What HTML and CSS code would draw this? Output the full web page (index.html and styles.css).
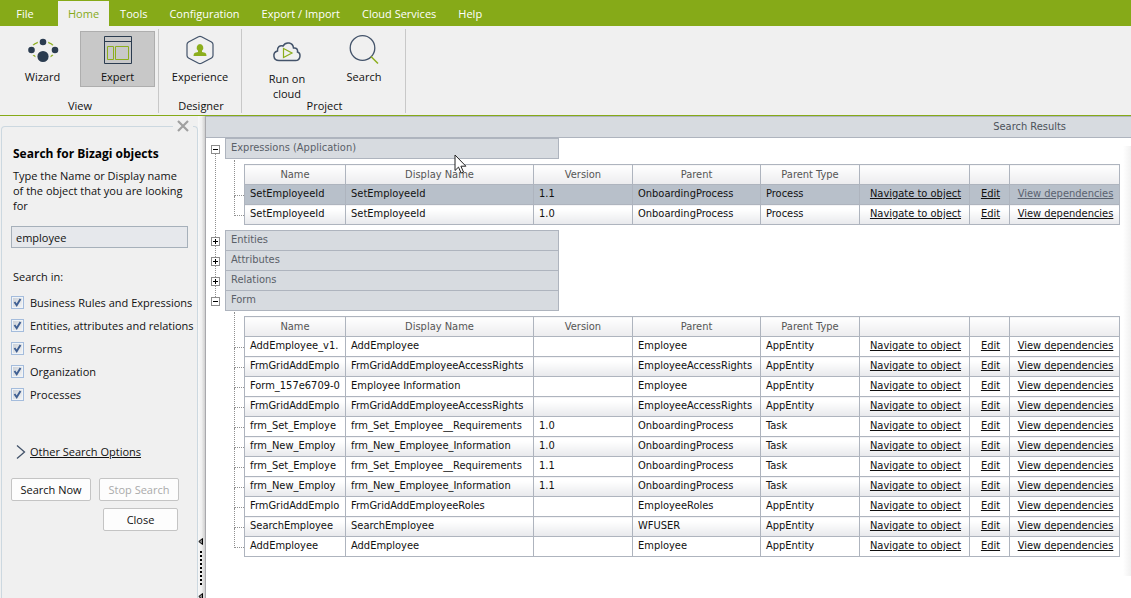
FILE: index.html
```
<!DOCTYPE html>
<html lang="en">
<head>
<meta charset="utf-8">
<title>Search for Bizagi objects</title>
<link rel="stylesheet" href="styles.css">
</head>
<body>
<div class="app">
  <nav class="tabs">
    <button class="tab tab-file" type="button">File</button>
    <button class="tab tab-active" type="button">Home</button>
    <button class="tab" type="button">Tools</button>
    <button class="tab" type="button">Configuration</button>
    <button class="tab" type="button">Export / Import</button>
    <button class="tab" type="button">Cloud Services</button>
    <button class="tab" type="button">Help</button>
  </nav>

  <header class="ribbon">
    <section class="group group-view">
      <div class="tools">
        <button class="tool" type="button">
          <svg class="icon" width="32" height="32" viewBox="0 0 32 32"><ellipse cx="16" cy="16" rx="12" ry="8.500" fill="none" stroke="#8cae1c" stroke-width="1.300"/><g fill="#2b3c50" stroke="#f0f0f0" stroke-width="2"><circle cx="16" cy="8" r="4.300"/><circle cx="4.500" cy="16" r="4.300"/><circle cx="28" cy="16" r="4.300"/><circle cx="16" cy="22.500" r="6.600"/></g></svg>
          <span>Wizard</span>
        </button>
        <button class="tool tool-on" type="button">
          <svg class="icon" width="32" height="32" viewBox="0 0 32 32"><path d="M2.500 2.500h27v27h-27zM2.500 7.500h27" fill="none" stroke="#2b3c50"/><path d="M5.500 12.500h6v13h-6zM13.500 12.500h13v13h-13z" fill="none" stroke="#8cae1c"/></svg>
          <span>Expert</span>
        </button>
      </div>
      <h2 class="group-name">View</h2>
    </section>
    <section class="group group-designer">
      <div class="tools">
        <button class="tool" type="button">
          <svg class="icon" width="32" height="32" viewBox="0 0 32 32"><path d="M14.500 2.700q1.500-.8 3 0l10 5.300q1.500 1 1.500 2.500v11q0 1.500-1.500 2.500l-10 5.300q-1.500.8-3 0l-10-5.300q-1.500-1-1.500-2.500v-11q0-1.500 1.500-2.500z" fill="none" stroke="#43536a" stroke-width="1.200"/><path d="M16 10a3.500 3.800 0 0 1 2 6.800v1.200l3 .7q1.500.5 1.500 3.300h-13q0-2.800 1.500-3.300l3-.7v-1.200a3.500 3.800 0 0 1 2-6.800z" fill="#8cae1c"/></svg>
          <span>Experience</span>
        </button>
      </div>
      <h2 class="group-name">Designer</h2>
    </section>
    <section class="group group-project">
      <div class="tools">
        <button class="tool tool-tall" type="button">
          <svg class="icon" width="32" height="32" viewBox="0 0 32 32"><path d="M8 26.500c-6 0-7-8-1.500-9.500-.5-4 2.500-6 5.500-5 3-5 10-3.500 10.500 2 3-.5 4.500 1.500 4 4 4 1.500 3 8.500-2 8.500z" fill="none" stroke="#43536a" stroke-width="1.500"/><path d="M12.500 14.500v9l8.500-4.500z" fill="none" stroke="#8cae1c" stroke-width="1.200"/></svg>
          <span>Run on<br>cloud</span>
        </button>
        <button class="tool" type="button">
          <svg class="icon" width="32" height="32" viewBox="0 0 32 32"><circle cx="14.500" cy="14" r="12.300" fill="none" stroke="#43536a" stroke-width="1.300"/><path d="M23 22.500l7 7" stroke="#8cae1c" stroke-width="1.500"/></svg>
          <span>Search</span>
        </button>
      </div>
      <h2 class="group-name">Project</h2>
    </section>
  </header>

  <div class="workspace">
    <aside class="sidebar">
      <form class="panel" onsubmit="return false">
        <button class="panel-close" type="button" aria-label="Close panel"><svg width="12" height="12" viewBox="0 0 12 12"><path d="M1 1l10 10M11 1L1 11" stroke="#a0a0a0" stroke-width="2.200"/></svg></button>
        <h1 class="panel-title">Search for Bizagi objects</h1>
        <label class="hint" for="query">Type the Name or Display name of the object that you are looking for</label>
        <input class="query" id="query" type="text" value="employee">
        <p class="scope">Search in:</p>
        <div class="checks">
          <label class="check"><input type="checkbox" checked>Business Rules and Expressions</label>
          <label class="check"><input type="checkbox" checked>Entities, attributes and relations</label>
          <label class="check"><input type="checkbox" checked>Forms</label>
          <label class="check"><input type="checkbox" checked>Organization</label>
          <label class="check"><input type="checkbox" checked>Processes</label>
        </div>
        <div class="more"><svg width="10" height="14" viewBox="0 0 10 14"><path d="M1 .5l7.500 6.500L1 13.500" fill="none" stroke="#43536a" stroke-width="1.300"/></svg><a href="#">Other Search Options</a></div>
        <div class="actions">
          <button class="btn" type="button">Search Now</button>
          <button class="btn" type="button" disabled>Stop Search</button>
          <button class="btn btn-close" type="button">Close</button>
        </div>
      </form>
      <div class="splitter">
        <svg width="5" height="7" viewBox="0 0 5 7"><path d="M4.500.5v6L.8 3.500z" fill="#888" stroke="#000"/></svg>
        <span class="grip"></span>
        <svg width="5" height="7" viewBox="0 0 5 7"><path d="M4.500.5v6L.8 3.500z" fill="#888" stroke="#000"/></svg>
      </div>
    </aside>

    <main class="results">
      <h2 class="results-title">Search Results</h2>
      <div class="tree">
        <section class="node">
          <div class="rail"><button class="toggle" type="button" aria-label="Collapse Expressions"><svg width="9" height="9" viewBox="0 0 9 9"><path d="M2 4.500h5" stroke="#000"/></svg></button></div>
          <div class="content">
            <h3 class="node-name">Expressions (Application)</h3>
            <div class="children">
              <div class="branches"><i></i><i></i></div>
              <table class="grid">
                <colgroup><col class="c-name"><col><col class="c-version"><col class="c-parent"><col class="c-type"><col class="c-nav"><col class="c-edit"><col class="c-view"></colgroup>
                <thead><tr><th>Name</th><th>Display Name</th><th>Version</th><th>Parent</th><th>Parent Type</th><th></th><th></th><th></th></tr></thead>
                <tbody>
                  <tr class="selected"><td>SetEmployeeId</td><td>SetEmployeeId</td><td>1.1</td><td>OnboardingProcess</td><td>Process</td><td><a href="#">Navigate to object</a></td><td><a href="#">Edit</a></td><td><a class="pressed" href="#">View dependencies</a></td></tr>
                  <tr><td>SetEmployeeId</td><td>SetEmployeeId</td><td>1.0</td><td>OnboardingProcess</td><td>Process</td><td><a href="#">Navigate to object</a></td><td><a href="#">Edit</a></td><td><a href="#">View dependencies</a></td></tr>
                </tbody>
              </table>
            </div>
          </div>
        </section>
        <section class="node">
          <div class="rail"><button class="toggle" type="button" aria-label="Expand Entities"><svg width="9" height="9" viewBox="0 0 9 9"><path d="M2 4.500h5M4.500 2v5" stroke="#000"/></svg></button></div>
          <div class="content"><h3 class="node-name">Entities</h3></div>
        </section>
        <section class="node">
          <div class="rail"><button class="toggle" type="button" aria-label="Expand Attributes"><svg width="9" height="9" viewBox="0 0 9 9"><path d="M2 4.500h5M4.500 2v5" stroke="#000"/></svg></button></div>
          <div class="content"><h3 class="node-name">Attributes</h3></div>
        </section>
        <section class="node">
          <div class="rail"><button class="toggle" type="button" aria-label="Expand Relations"><svg width="9" height="9" viewBox="0 0 9 9"><path d="M2 4.500h5M4.500 2v5" stroke="#000"/></svg></button></div>
          <div class="content"><h3 class="node-name">Relations</h3></div>
        </section>
        <section class="node">
          <div class="rail"><button class="toggle" type="button" aria-label="Collapse Form"><svg width="9" height="9" viewBox="0 0 9 9"><path d="M2 4.500h5" stroke="#000"/></svg></button></div>
          <div class="content">
            <h3 class="node-name">Form</h3>
            <div class="children">
              <div class="branches"><i></i><i></i><i></i><i></i><i></i><i></i><i></i><i></i><i></i><i></i><i></i></div>
              <table class="grid">
                <colgroup><col class="c-name"><col><col class="c-version"><col class="c-parent"><col class="c-type"><col class="c-nav"><col class="c-edit"><col class="c-view"></colgroup>
                <thead><tr><th>Name</th><th>Display Name</th><th>Version</th><th>Parent</th><th>Parent Type</th><th></th><th></th><th></th></tr></thead>
                <tbody>
                  <tr><td>AddEmployee_v1.</td><td>AddEmployee</td><td></td><td>Employee</td><td>AppEntity</td><td><a href="#">Navigate to object</a></td><td><a href="#">Edit</a></td><td><a href="#">View dependencies</a></td></tr>
                  <tr><td>FrmGridAddEmplo</td><td>FrmGridAddEmployeeAccessRights</td><td></td><td>EmployeeAccessRights</td><td>AppEntity</td><td><a href="#">Navigate to object</a></td><td><a href="#">Edit</a></td><td><a href="#">View dependencies</a></td></tr>
                  <tr><td>Form_157e6709-0</td><td>Employee Information</td><td></td><td>Employee</td><td>AppEntity</td><td><a href="#">Navigate to object</a></td><td><a href="#">Edit</a></td><td><a href="#">View dependencies</a></td></tr>
                  <tr><td>FrmGridAddEmplo</td><td>FrmGridAddEmployeeAccessRights</td><td></td><td>EmployeeAccessRights</td><td>AppEntity</td><td><a href="#">Navigate to object</a></td><td><a href="#">Edit</a></td><td><a href="#">View dependencies</a></td></tr>
                  <tr><td>frm_Set_Employe</td><td>frm_Set_Employee__Requirements</td><td>1.0</td><td>OnboardingProcess</td><td>Task</td><td><a href="#">Navigate to object</a></td><td><a href="#">Edit</a></td><td><a href="#">View dependencies</a></td></tr>
                  <tr><td>frm_New_Employ</td><td>frm_New_Employee_Information</td><td>1.0</td><td>OnboardingProcess</td><td>Task</td><td><a href="#">Navigate to object</a></td><td><a href="#">Edit</a></td><td><a href="#">View dependencies</a></td></tr>
                  <tr><td>frm_Set_Employe</td><td>frm_Set_Employee__Requirements</td><td>1.1</td><td>OnboardingProcess</td><td>Task</td><td><a href="#">Navigate to object</a></td><td><a href="#">Edit</a></td><td><a href="#">View dependencies</a></td></tr>
                  <tr><td>frm_New_Employ</td><td>frm_New_Employee_Information</td><td>1.1</td><td>OnboardingProcess</td><td>Task</td><td><a href="#">Navigate to object</a></td><td><a href="#">Edit</a></td><td><a href="#">View dependencies</a></td></tr>
                  <tr><td>FrmGridAddEmplo</td><td>FrmGridAddEmployeeRoles</td><td></td><td>EmployeeRoles</td><td>AppEntity</td><td><a href="#">Navigate to object</a></td><td><a href="#">Edit</a></td><td><a href="#">View dependencies</a></td></tr>
                  <tr><td>SearchEmployee</td><td>SearchEmployee</td><td></td><td>WFUSER</td><td>AppEntity</td><td><a href="#">Navigate to object</a></td><td><a href="#">Edit</a></td><td><a href="#">View dependencies</a></td></tr>
                  <tr><td>AddEmployee</td><td>AddEmployee</td><td></td><td>Employee</td><td>AppEntity</td><td><a href="#">Navigate to object</a></td><td><a href="#">Edit</a></td><td><a href="#">View dependencies</a></td></tr>
                </tbody>
              </table>
            </div>
          </div>
        </section>
      </div>
    </main>
  </div>
  <svg class="pointer" width="13" height="20" viewBox="0 0 13 20"><path d="M1 1v15.500l3.500-3.400 2.600 5.900 2.400-1-2.600-5.800h5z" fill="#fff" stroke="#222"/></svg>
</div>
</body>
</html>
```
FILE: styles.css
```
* { box-sizing: border-box; }

body {
  margin: 0;
  background: #fff;
  color: #111;
  font: 11px/15px "Open Sans", "Noto Sans", sans-serif;
}

h1, h2, h3, p { margin: 0; font-weight: normal; font-size: inherit; }

button, input { font: inherit; color: inherit; }

button { border: 0; padding: 0; background: none; }

a { color: inherit; }

.app {
  position: relative;
  display: flex;
  flex-direction: column;
  height: 100vh;
  min-height: 570px;
  overflow: hidden;
}

/* Menu tabs */
.tabs {
  display: flex;
  align-items: stretch;
  height: 26px;
  background: #86aa18;
}

.tab { padding: 0 11px; color: #fff; white-space: nowrap; }
.tab-file { width: 50px; margin-right: 8px; }
.tab-active { margin-top: 1px; padding: 0 10px 1px; background: #f0f0f0; color: #86aa18; }

/* Ribbon */
.ribbon {
  display: flex;
  height: 90px;
  padding-top: 3px;
  background: #f0f0f0;
  border-bottom: 1px solid #86aa18;
}

.group {
  display: flex;
  flex-direction: column;
  border-right: 1px solid #c8c8c8;
  margin-bottom: 2px;
}

.group-view { width: 159px; }
.group-designer { width: 83px; }
.group-project { width: 164px; }

.tools { display: flex; justify-content: center; gap: 2px; height: 69px; padding-top: 2px; }
.group-view .tools { justify-content: flex-end; gap: 0; padding-right: 3px; }
.group-project .tools { padding-left: 4px; }

.tool {
  display: flex;
  flex-direction: column;
  align-items: center;
  width: 75px;
  height: 56px;
  padding-top: 2px;
  gap: 3px;
  border: 1px solid transparent;
}

.tool-on { background: #c8c8c8; border-color: #aeaeae; }
.tool-tall { height: 70px; gap: 5px; }
.icon { flex: none; }
.group-name { padding-left: 2px; text-align: center; }

/* Search panel */
.workspace { display: flex; flex: 1; min-height: 0; }

.sidebar {
  display: flex;
  flex: none;
  width: 206px;
  background: #f0f0f0;
  border-right: 1px solid #a8a8ac;
}

.panel {
  position: relative;
  flex: 1;
  min-width: 0;
  margin: 10px 0 0 1px;
  padding: 19px 9px 0;
  border: 1px solid #ccd8e0;
  border-bottom: 0;
  border-radius: 4px 4px 0 0;
}

.panel-close {
  position: absolute;
  top: -8px;
  right: 4px;
  width: 20px;
  height: 14px;
  background: #f0f0f0;
}
.panel-close svg { display: block; margin: auto; }

.panel-title { padding-left: 2px; font-size: 12px; font-weight: bold; line-height: 15px; color: #000; }
.hint { display: block; margin: 7px 0 13px; padding-left: 2px; }

.query {
  display: block;
  width: 100%;
  height: 22px;
  padding: 0 4px;
  background: #e6e8ec;
  border: 1px solid #a6b0ba;
}

.scope { margin: 21px 0 7px; padding-left: 2px; }

.check { display: flex; align-items: center; gap: 6px; height: 23px; white-space: nowrap; }

.check input {
  appearance: none;
  flex: none;
  width: 13px;
  height: 13px;
  margin: 0;
  border: 1px solid #a4bcdc;
  background:
    url("data:image/svg+xml,%3Csvg xmlns='http://www.w3.org/2000/svg' viewBox='0 0 11 11'%3E%3Cpath d='M2.500 5l2.200 3.300L8.500 2' fill='none' stroke='%233f5f92' stroke-width='1.900'/%3E%3C/svg%3E"),
    linear-gradient(135deg, #c8ced6, #f6f6f6);
  box-shadow: inset 0 0 0 1px #f0f4f8;
}

.more { display: flex; align-items: center; gap: 4px; margin: 38px 0 19px; padding-left: 5px; }

.actions { display: flex; flex-wrap: wrap; gap: 7px 8px; }

.btn {
  width: 80px;
  height: 23px;
  background: #fdfdfd;
  border: 1px solid #c4c4c4;
  border-radius: 2px;
  white-space: nowrap;
}
.btn:disabled { color: #aaa; }
.btn-close { width: 75px; margin-left: 92px; }

.splitter {
  display: flex;
  flex: none;
  flex-direction: column;
  align-items: flex-start;
  justify-content: flex-end;
  gap: 8px;
  width: 7px;
  overflow: hidden;
  background: linear-gradient(to right, #f8f8f8, #f0f0f0 50%, #cfcfcf);
}
.splitter svg { flex: none; margin-bottom: -2px; }

.grip {
  width: 2px;
  height: 34px;
  margin-left: 2px;
  background: repeating-linear-gradient(#000 0 2px, transparent 2px 4px);
}

/* Results */
.results {
  flex: 1;
  min-width: 0;
  background: linear-gradient(to right, #fff, #f1f1f1) right 30px / 8px 430px no-repeat;
}

.results-title {
  height: 22px;
  padding-right: 65px;
  background: #d7dbe0;
  border: solid #aeb4be;
  border-width: 1px 0;
  color: #4c525a;
  line-height: 20px;
  text-align: right;
}

.results, .grid { font: 11px/17px "DejaVu Sans Condensed", "Noto Sans", sans-serif; }

.tree { padding-right: 11px; }

.node { display: flex; margin-bottom: -1px; }

.rail { display: flex; flex: none; flex-direction: column; width: 19px; padding-left: 5px; }

.rail::before, .rail::after {
  content: "";
  width: 1px;
  margin-left: 4px;
  border-left: 1px dotted #909090;
}
.rail::before { flex: 0 0 7px; }
.rail::after { flex: 1; }
.node:first-child .rail::before, .node:last-child .rail::after { border-color: transparent; }

.toggle {
  flex: none;
  width: 9px;
  height: 9px;
  outline: 0;
  background: #fff;
  box-shadow: inset 0 0 0 1px #8c8c8c;
}
.toggle svg { display: block; }

.content { flex: 1; min-width: 0; }

.node-name {
  width: 334px;
  height: 21px;
  padding-left: 5px;
  background: #d7dbe0;
  border: 1px solid #aeb4be;
  color: #5a6068;
}

.children { display: flex; padding-bottom: 6px; }

.branches { flex: none; width: 10px; margin: 1px 0 0 9px; }
.branches i {
  display: block;
  height: 20px;
  border: dotted #909090;
  border-width: 0 0 1px 1px;
}
.branches i:first-child { height: 36px; }

.grid {
  width: 100%;
  margin-top: 5px;
  border-collapse: collapse;
  table-layout: fixed;
}

.c-name { width: 101px; }
.c-version, .c-type { width: 99px; }
.c-parent { width: 128px; }
.c-nav, .c-view { width: 110px; }
.c-edit { width: 40px; }

.grid th, .grid td {
  height: 20px;
  padding: 0 0 2px 5px;
  border: 1px solid #aeb4be;
  overflow: hidden;
  text-align: left;
  white-space: nowrap;
}

.grid th {
  padding: 0 0 1px;
  background: linear-gradient(#fff, #ececee);
  color: #555;
  font-weight: normal;
  text-align: center;
}

.grid tbody tr:nth-child(even) td { background: linear-gradient(#fff 20%, #e8e9ec); }
.grid td:nth-child(n+6) { padding: 0 0 2px 2px; text-align: center; }
.grid .selected td { background: #b8c0ca; }
.pressed { color: #5a6270; }

/* Mouse pointer */
.pointer { position: absolute; left: 454px; top: 154px; }
```
